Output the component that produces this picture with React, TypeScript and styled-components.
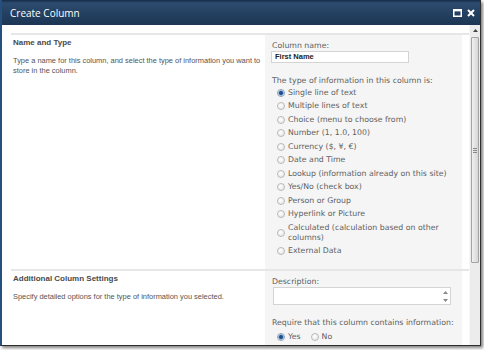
import React from 'react';
import styled, { createGlobalStyle } from 'styled-components';

const GlobalStyle = createGlobalStyle`
  html, body { margin: 0; padding: 0; background: #fff; }
  #root { width: 484px; height: 350px; overflow: hidden; }
`;

const Dialog = styled.div`
  width: 481px;
  height: 346px;
  box-sizing: border-box;
  display: flex;
  flex-direction: column;
  background: #fff;
  border-left: 2px solid #23507e;
  border-right: 1px solid #2e2e2e;
  border-bottom: 1px solid #2e2e2e;
  box-shadow: 2px 2px 3px rgba(0, 0, 0, 0.5);
  overflow: hidden;
`;

const TitleBar = styled.div`
  height: 25px;
  flex: none;
  display: flex;
  align-items: center;
  padding: 0 5px 0 8px;
  background: linear-gradient(to bottom, #132b48 0, #2d4b6e 3px, #233f5f 60%, #1c3554 100%);
`;

const Title = styled.div`
  flex: 1;
  font-family: "Open Sans", "Liberation Sans", sans-serif;
  font-size: 10px;
  color: #fff;
  padding-top: 1px;
`;

const TitleButtons = styled.div`
  display: flex;
  gap: 5px;
  align-items: center;
`;

const Body = styled.div`
  flex: 1;
  display: flex;
  min-height: 0;
`;

const Content = styled.div`
  flex: 1;
  padding: 8px 0 0 9px;
  overflow: hidden;
`;

const Section = styled.div`
  display: grid;
  grid-template-columns: 254px 197px;
  border-top: 2px solid #e6e6e6;
`;

const SectionInfo = styled.div`
  padding: 3px 0 0 2px;
  font-family: "Liberation Sans", Arial, sans-serif;
  color: #555;
`;

const SectionHeading = styled.h3`
  margin: 0;
  font-size: 8px;
  line-height: 10px;
  font-weight: bold;
  color: #4a4a4a;
`;

const SectionText = styled.p`
  margin: 8px 0 0;
  font-size: 7.45px;
  line-height: 10px;
`;

const Controls = styled.div`
  background: #f5f5f5;
  padding: 6px 0 11px 7px;
  font-family: "DejaVu Sans", Verdana, sans-serif;
  font-size: 7.8px;
  line-height: 10px;
  color: #5e5e5e;
`;

const Label = styled.div<{ $gap?: number }>`
  margin-top: ${(p) => p.$gap || 0}px;
  white-space: nowrap;
`;

const TextInput = styled.div`
  width: 138px;
  height: 12px;
  box-sizing: border-box;
  margin-left: -1px;
  border: 1px solid #d4d4d4;
  background: #fff;
  padding: 0 3px;
  font-family: "Liberation Sans", Arial, sans-serif;
  font-weight: bold;
  font-size: 7.5px;
  line-height: 10px;
  color: #222;
`;

const RadioList = styled.div<{ $inline?: boolean }>`
  display: flex;
  flex-direction: ${(p) => (p.$inline ? 'row' : 'column')};
  gap: ${(p) => (p.$inline ? '10px' : '0')};
  margin: ${(p) => (p.$inline ? '2px' : '0')} 0 0 5px;
`;

const RadioRow = styled.div`
  display: flex;
  align-items: center;
  gap: 3px;
  padding: 1.75px 0;
`;

const Radio = styled.span<{ $checked?: boolean }>`
  flex: none;
  width: 8px;
  height: 8px;
  box-sizing: border-box;
  border-radius: 50%;
  border: 1px solid ${(p) => (p.$checked ? '#8a9fb8' : '#b9b9b9')};
  background: ${(p) =>
    p.$checked
      ? 'radial-gradient(circle, #1d4f8e 0 1.5px, #6f98c8 2.2px, #eef2f7 3px)'
      : 'radial-gradient(circle at 40% 35%, #ffffff 0, #e2e2e2 100%)'};
`;

const RadioText = styled.span`
  max-width: 172px;
`;

const TextArea = styled.div`
  width: 178px;
  height: 18px;
  box-sizing: border-box;
  margin-left: 1px;
  border: 1px solid #d4d4d4;
  background: #fff;
  display: flex;
  justify-content: flex-end;
`;

const Spinner = styled.div`
  width: 9px;
  display: flex;
  flex-direction: column;
  justify-content: space-between;
  align-items: center;
  padding: 3px 0 2px;
`;

const ScrollBar = styled.div`
  width: 11px;
  flex: none;
  display: flex;
  flex-direction: column;
  align-items: center;
  background: #ececec;
  border-left: 1px solid #f8f8f8;
  box-sizing: border-box;
`;

const ScrollArrow = styled.div`
  height: 11px;
  display: flex;
  align-items: center;
  justify-content: center;
`;

const ScrollThumb = styled.div`
  width: 8px;
  height: 226px;
  margin-top: 1px;
  box-sizing: border-box;
  border: 1px solid #a4a4a4;
  border-radius: 1px;
  background: linear-gradient(to right, #f0f0f0, #d6d6d6);
  display: flex;
  align-items: center;
  justify-content: center;
`;

const Grip = styled.div`
  width: 4px;
  height: 5px;
  background: repeating-linear-gradient(to bottom, #888 0 1px, transparent 1px 2px);
`;

const types = [
  'Single line of text',
  'Multiple lines of text',
  'Choice (menu to choose from)',
  'Number (1, 1.0, 100)',
  'Currency ($, ¥, €)',
  'Date and Time',
  'Lookup (information already on this site)',
  'Yes/No (check box)',
  'Person or Group',
  'Hyperlink or Picture',
  'Calculated (calculation based on other columns)',
  'External Data',
];

export default function App() {
  return (
    <>
      <GlobalStyle />
      <Dialog>
        <TitleBar>
          <Title>Create Column</Title>
          <TitleButtons>
            <svg width="9" height="8" viewBox="0 0 9 8">
              <rect x="0.75" y="0.75" width="7.5" height="6.5" fill="none" stroke="#fff" strokeWidth="1.5" />
              <rect x="0.75" y="0.75" width="7.5" height="1.6" fill="#fff" />
            </svg>
            <svg width="8" height="8" viewBox="0 0 8 8">
              <path d="M1 1L7 7M7 1L1 7" stroke="#fff" strokeWidth="2" />
            </svg>
          </TitleButtons>
        </TitleBar>
        <Body>
          <Content>
            <Section>
              <SectionInfo>
                <SectionHeading>Name and Type</SectionHeading>
                <SectionText>
                  Type a name for this column, and select the type of information you want to store in the column.
                </SectionText>
              </SectionInfo>
              <Controls>
                <Label>Column name:</Label>
                <TextInput>First Name</TextInput>
                <Label $gap={13}>The type of information in this column is:</Label>
                <RadioList>
                  {types.map((t, i) => (
                    <RadioRow key={t}>
                      <Radio $checked={i === 0} />
                      <RadioText>{t}</RadioText>
                    </RadioRow>
                  ))}
                </RadioList>
              </Controls>
            </Section>
            <Section>
              <SectionInfo>
                <SectionHeading>Additional Column Settings</SectionHeading>
                <SectionText>Specify detailed options for the type of information you selected.</SectionText>
              </SectionInfo>
              <Controls>
                <Label>Description:</Label>
                <TextArea>
                  <Spinner>
                    <svg width="5" height="3" viewBox="0 0 5 3">
                      <path d="M0 3L2.5 0L5 3Z" fill="#888" />
                    </svg>
                    <svg width="5" height="3" viewBox="0 0 5 3">
                      <path d="M0 0L2.5 3L5 0Z" fill="#888" />
                    </svg>
                  </Spinner>
                </TextArea>
                <Label $gap={13}>Require that this column contains information:</Label>
                <RadioList $inline>
                  <RadioRow>
                    <Radio $checked />
                    <RadioText>Yes</RadioText>
                  </RadioRow>
                  <RadioRow>
                    <Radio />
                    <RadioText>No</RadioText>
                  </RadioRow>
                </RadioList>
              </Controls>
            </Section>
          </Content>
          <ScrollBar>
            <ScrollArrow>
              <svg width="5" height="3" viewBox="0 0 5 3">
                <path d="M0 3L2.5 0L5 3Z" fill="#444" />
              </svg>
            </ScrollArrow>
            <ScrollThumb>
              <Grip />
            </ScrollThumb>
          </ScrollBar>
        </Body>
      </Dialog>
    </>
  );
}
